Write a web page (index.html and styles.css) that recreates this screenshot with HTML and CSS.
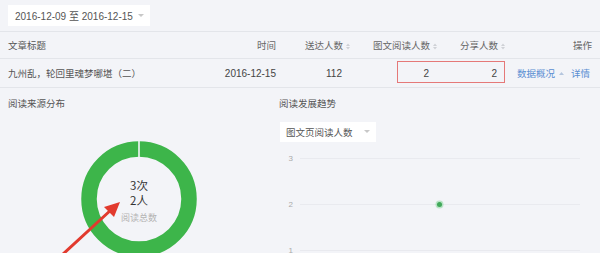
FILE: index.html
```html
<!DOCTYPE html>
<html lang="zh-CN">
<head>
<meta charset="utf-8">
<title>文章数据</title>
<link rel="stylesheet" href="styles.css">
</head>
<body>
<div class="page">
  <div class="toolbar">
    <div class="date-select">
      <span class="num">2016-12-09 至 2016-12-15</span>
      <svg class="caret" width="6" height="4" viewBox="0 0 6 4"><path d="M0 0h6L3 3z" fill="#c8c8c8"/></svg>
    </div>
  </div>

  <div class="row head">
    <div class="cell left">文章标题</div>
    <div class="cell">时间</div>
    <div class="cell">送达人数<svg class="sort" width="4" height="7" viewBox="0 0 4 7"><path d="M0 3L2 0.5L4 3zM0 4L2 6.5L4 4z" fill="#cfd1d6"/></svg></div>
    <div class="cell">图文阅读人数<svg class="sort" width="4" height="7" viewBox="0 0 4 7"><path d="M0 3L2 0.5L4 3zM0 4L2 6.5L4 4z" fill="#cfd1d6"/></svg></div>
    <div class="cell">分享人数<svg class="sort" width="4" height="7" viewBox="0 0 4 7"><path d="M0 3L2 0.5L4 3zM0 4L2 6.5L4 4z" fill="#cfd1d6"/></svg></div>
    <div class="cell">操作</div>
  </div>

  <div class="row data">
    <div class="cell left">九州乱，轮回里魂梦哪堪（二）</div>
    <div class="cell num">2016-12-15</div>
    <div class="cell num pad">112</div>
    <div class="cell num pad">2</div>
    <div class="cell num pad">2</div>
    <div class="cell ops"><span class="link">数据概况</span><svg class="up" width="5" height="3" viewBox="0 0 5 3"><path d="M0 3L2.5 0L5 3z" fill="#b5c6de"/></svg><span class="link">详情</span></div>
    <div class="highlight"></div>
  </div>

  <div class="bottom">
    <div class="panel source">
      <div class="panel-title">阅读来源分布</div>
      <div class="donut">
        <svg class="ring" width="120" height="120" viewBox="0 0 120 120">
          <circle cx="60" cy="60" r="50" fill="none" stroke="#3db54a" stroke-width="15.5"/>
          <rect x="59.2" y="1" width="1.6" height="18" fill="#f3f4f8"/>
        </svg>
        <div class="donut-text">
          <div class="big">3次</div>
          <div class="big">2人</div>
          <div class="small">阅读总数</div>
        </div>
      </div>
    </div>
    <div class="panel trend">
      <div class="panel-title">阅读发展趋势</div>
      <div class="metric-select">
        <span>图文页阅读人数</span>
        <svg class="caret" width="6" height="4" viewBox="0 0 6 4"><path d="M0 0h6L3 3z" fill="#c8c8c8"/></svg>
      </div>
      <div class="chart">
        <div class="grid-row"><span class="ylabel">3</span><span class="gline"></span></div>
        <div class="grid-row"><span class="ylabel">2</span><span class="gline"><span class="dot"></span></span></div>
        <div class="grid-row"><span class="ylabel">1</span><span class="gline"></span></div>
      </div>
    </div>
  </div>

  <svg class="arrow" width="80" height="62" viewBox="0 0 80 62">
    <line x1="12" y1="60" x2="62" y2="14" stroke="#e23a2e" stroke-width="3" stroke-linecap="round"/>
    <path d="M70 7L54 12L64 22z" fill="#e23a2e"/>
  </svg>
</div>
</body>
</html>
```

FILE: styles.css
```css
html, body {
  margin: 0;
  padding: 0;
  background: #f3f4f8;
}
body {
  width: 600px;
  height: 253px;
  overflow: hidden;
  font-family: "Liberation Sans", "Noto Sans CJK SC", sans-serif;
  font-size: 9.5px;
  color: #555;
}
.page {
  position: relative;
  width: 600px;
  height: 253px;
}
.num {
  font-size: 10px;
}
.toolbar {
  height: 31px;
  padding: 5px 8px 0;
  box-sizing: border-box;
}
.date-select {
  width: 142px;
  height: 21px;
  background: #fff;
  display: flex;
  align-items: center;
  justify-content: space-between;
  padding: 0 6px 0 7px;
  box-sizing: border-box;
  color: #555;
}
.row {
  display: grid;
  grid-template-columns: 1fr 70px 74px 87px 68px 87px;
  padding: 0 8px;
  border-top: 1px solid #e3e5ea;
  align-items: center;
  position: relative;
}
.row.head {
  height: 27px;
  box-sizing: border-box;
  color: #666;
}
.row.data {
  height: 30px;
  box-sizing: border-box;
  border-bottom: 1px solid #e3e5ea;
  color: #444;
}
.cell {
  text-align: right;
  white-space: nowrap;
}
.cell.left {
  text-align: left;
  color: #555;
}
.cell.pad {
  padding-right: 8px;
}
.sort {
  margin-left: 3px;
  vertical-align: -1px;
}
.ops {
  display: flex;
  justify-content: flex-end;
  align-items: center;
  padding-right: 2px;
}
.link {
  color: #5a8ed2;
}
.up {
  margin: 0 7px 0 4px;
}
.highlight {
  position: absolute;
  left: 397px;
  top: 2px;
  width: 108px;
  height: 22px;
  border: 1px solid #e57878;
  box-sizing: border-box;
}
.bottom {
  display: flex;
}
.panel {
  padding-top: 10px;
  box-sizing: border-box;
}
.panel-title {
  line-height: 12px;
  color: #555;
}
.source {
  width: 270px;
  padding-left: 8px;
}
.trend {
  flex: 1;
  padding-left: 9px;
  padding-right: 20px;
}
.donut {
  display: grid;
  width: 120px;
  height: 120px;
  margin: 29px 0 0 71px;
}
.ring, .donut-text {
  grid-area: 1 / 1;
}
.donut-text {
  display: flex;
  flex-direction: column;
  align-items: center;
  justify-content: center;
  padding-top: 4px;
  font-family: "Noto Sans CJK SC", sans-serif;
}
.big {
  font-size: 11.5px;
  line-height: 15px;
  color: #333;
}
.small {
  font-size: 9px;
  line-height: 13px;
  color: #b3b3b3;
  margin-top: 3px;
}
.metric-select {
  width: 96px;
  height: 20px;
  margin: 12px 0 0 1px;
  background: #fff;
  display: flex;
  align-items: center;
  justify-content: space-between;
  padding: 0 6px 0 6px;
  box-sizing: border-box;
  color: #555;
}
.chart {
  display: flex;
  flex-direction: column;
  gap: 45px;
  margin-top: 16px;
}
.grid-row {
  display: flex;
  align-items: center;
  height: 1px;
}
.ylabel {
  width: 14px;
  text-align: right;
  font-size: 8px;
  color: #aaa;
  margin-right: 7px;
}
.gline {
  flex: 1;
  height: 1px;
  background: #e9eaef;
  position: relative;
}
.dot {
  position: absolute;
  left: 139px;
  top: -2px;
  width: 5px;
  height: 5px;
  border-radius: 50%;
  background: #41a85a;
  box-shadow: 0 0 0 1.5px rgba(80, 200, 110, 0.35);
  transform: translateX(-2px);
}
.arrow {
  position: absolute;
  left: 50px;
  top: 195px;
}
```
